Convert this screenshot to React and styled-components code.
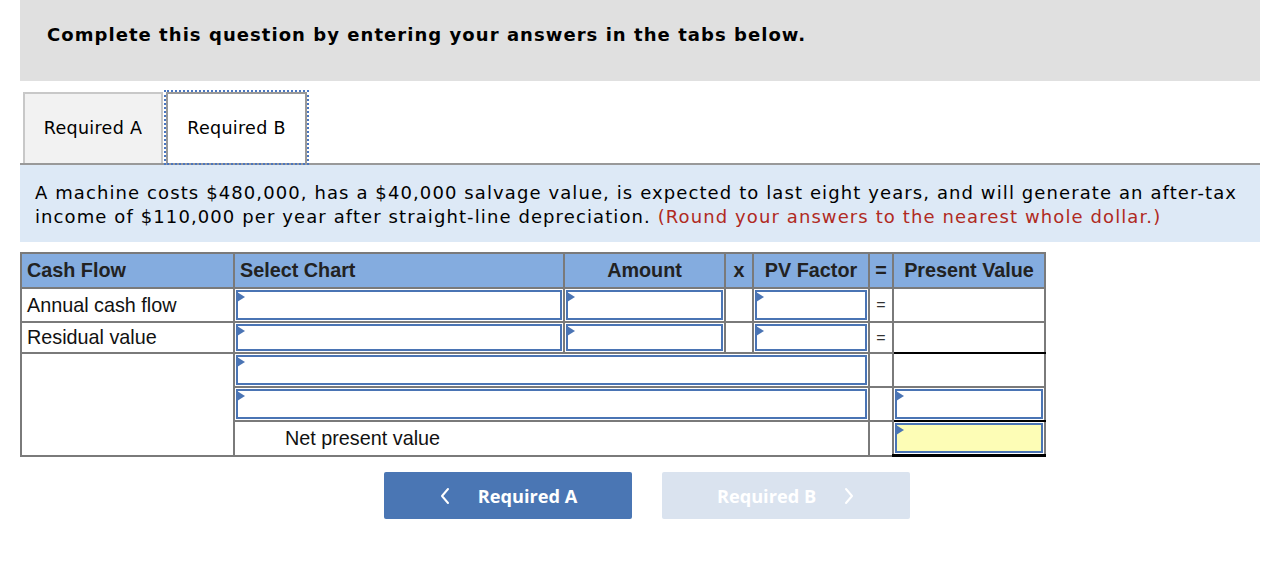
import React from "react";
import styled, { createGlobalStyle } from "styled-components";

const Global = createGlobalStyle`
  html, body { margin: 0; padding: 0; background: #fff; }
  body { padding: 0 6px 0 20px; font-family: "DejaVu Sans", Verdana, sans-serif; color: #000; }
`;

const Page = styled.div`
  width: 1240px;
`;

const Banner = styled.div`
  box-sizing: border-box;
  height: 81px;
  background: #e0e0e0;
  padding: 23px 27px 0;
  font-weight: bold;
  font-size: 18px;
  letter-spacing: 1.05px;
  line-height: 24px;
  color: #000;
`;

const TabStrip = styled.div`
  display: flex;
  gap: 3px;
  margin-top: 11px;
  padding-left: 3px;
  border-bottom: 2px solid #999;
`;

const Tab = styled.div`
  box-sizing: border-box;
  height: 71px;
  width: ${(p) => (p.$active ? 141 : 140)}px;
  display: flex;
  align-items: center;
  justify-content: center;
  font-size: 17.5px;
  letter-spacing: 0.3px;
  color: #000;
  background: ${(p) => (p.$active ? "#fff" : "#f2f2f2")};
  border: 2px solid ${(p) => (p.$active ? "#999" : "#c8c8c8")};
  border-bottom: none;
  outline: ${(p) => (p.$active ? "2px dotted #4a76c0" : "none")};
  padding-bottom: 2px;
`;

const Prompt = styled.div`
  box-sizing: border-box;
  height: 77px;
  background: #dde9f6;
  padding: 16px 15px 0;
  font-size: 18px;
  letter-spacing: 1.1px;
  line-height: 24px;
  color: #000;
`;

const Hint = styled.span`
  color: #b02a22;
`;

const Grid = styled.table`
  margin-top: 10px;
  width: 1024px;
  table-layout: fixed;
  border-collapse: collapse;
  border: 2px solid #7a7a7a;
  font-family: "Liberation Sans", Arial, sans-serif;
  font-size: 19.8px;
  color: #111;
`;

const HeadRow = styled.tr`
  height: 35px;
  background: #84acdf;
`;

const Row = styled.tr`
  height: ${(p) => p.$h}px;
`;

const Th = styled.th`
  border: 2px solid #7a7a7a;
  padding: 0 5px;
  font-weight: bold;
  color: #222;
  text-align: ${(p) => p.$align || "center"};
  vertical-align: middle;
  white-space: nowrap;
  overflow: hidden;
`;

const Td = styled.td`
  border: 2px solid #7a7a7a;
  padding: 0 5px;
  vertical-align: middle;
  white-space: nowrap;
  ${(p) => p.$rule && `border-bottom: ${p.$rule}px solid #000;`}
`;

const FieldCell = styled.td`
  border: 2px solid #7a7a7a;
  padding: 1px;
  vertical-align: top;
  ${(p) => p.$rule && `border-bottom: ${p.$rule}px solid #000;`}
`;

const Field = styled.div`
  position: relative;
  box-sizing: border-box;
  height: ${(p) => p.$h}px;
  border: 2px solid #4a74b4;
  background: ${(p) => (p.$total ? "#fdfdb6" : "#fff")};

  &::before {
    content: "";
    position: absolute;
    left: -1px;
    top: 0;
    border-top: 5px solid transparent;
    border-bottom: 5px solid transparent;
    border-left: 8px solid #4a74b4;
  }
`;

const OpCell = styled.td`
  border: 2px solid #7a7a7a;
  padding: 0;
  text-align: center;
  vertical-align: middle;
  font-size: 16px;
  color: #333;
`;

const NpvLabel = styled.td`
  border: 2px solid #7a7a7a;
  padding: 0 0 0 50px;
  vertical-align: middle;
  color: #111;
`;

const Nav = styled.div`
  display: flex;
  gap: 30px;
  margin: 15px 0 0 364px;
`;

const NavButton = styled.button`
  box-sizing: border-box;
  width: 248px;
  height: 47px;
  border: none;
  border-radius: 2px;
  display: flex;
  align-items: center;
  justify-content: center;
  gap: 27px;
  font-family: "Open Sans", "Roboto", sans-serif;
  font-weight: 700;
  font-size: 18.2px;
  color: #fff;
  background: ${(p) => (p.disabled ? "#dae3ef" : "#4a76b4")};
  cursor: ${(p) => (p.disabled ? "default" : "pointer")};
  padding: 0;
`;

const Chevron = ({ dir }) => (
  <svg width="12" height="18" viewBox="0 0 12 18" fill="none">
    <path
      d={dir === "left" ? "M9 2 L3 9 L9 16" : "M3 2 L9 9 L3 16"}
      stroke="#fff"
      strokeWidth="2"
      strokeLinecap="round"
      strokeLinejoin="round"
    />
  </svg>
);

export default function App() {
  return (
    <Page>
      <Global />
      <Banner>Complete this question by entering your answers in the tabs below.</Banner>
      <TabStrip>
        <Tab>Required A</Tab>
        <Tab $active>Required B</Tab>
      </TabStrip>
      <Prompt>
        A machine costs $480,000, has a $40,000 salvage value, is expected to last eight years, and will generate an after-tax
        <br />
        income of $110,000 per year after straight-line depreciation.{" "}
        <Hint>(Round your answers to the nearest whole dollar.)</Hint>
      </Prompt>
      <Grid>
        <colgroup>
          <col style={{ width: 213 }} />
          <col style={{ width: 330 }} />
          <col style={{ width: 161 }} />
          <col style={{ width: 28 }} />
          <col style={{ width: 116 }} />
          <col style={{ width: 24 }} />
          <col style={{ width: 152 }} />
        </colgroup>
        <thead>
          <HeadRow>
            <Th $align="left">Cash Flow</Th>
            <Th $align="left">Select Chart</Th>
            <Th>Amount</Th>
            <Th>x</Th>
            <Th>PV Factor</Th>
            <Th>=</Th>
            <Th>Present Value</Th>
          </HeadRow>
        </thead>
        <tbody>
          <Row $h={34}>
            <Td>Annual cash flow</Td>
            <FieldCell><Field $h={30} /></FieldCell>
            <FieldCell><Field $h={30} /></FieldCell>
            <Td />
            <FieldCell><Field $h={30} /></FieldCell>
            <OpCell>=</OpCell>
            <Td />
          </Row>
          <Row $h={31}>
            <Td>Residual value</Td>
            <FieldCell><Field $h={27} /></FieldCell>
            <FieldCell><Field $h={27} /></FieldCell>
            <Td />
            <FieldCell><Field $h={27} /></FieldCell>
            <OpCell>=</OpCell>
            <Td $rule={2} />
          </Row>
          <Row $h={34}>
            <Td rowSpan={3} />
            <FieldCell colSpan={4}><Field $h={30} /></FieldCell>
            <Td />
            <Td />
          </Row>
          <Row $h={34}>
            <FieldCell colSpan={4}><Field $h={30} /></FieldCell>
            <Td />
            <FieldCell $rule={2}><Field $h={30} /></FieldCell>
          </Row>
          <Row $h={34}>
            <NpvLabel colSpan={4}>Net present value</NpvLabel>
            <Td />
            <FieldCell $rule={3}><Field $h={30} $total /></FieldCell>
          </Row>
        </tbody>
      </Grid>
      <Nav>
        <NavButton>
          <Chevron dir="left" />
          <span>Required A</span>
        </NavButton>
        <NavButton disabled>
          <span>Required B</span>
          <Chevron dir="right" />
        </NavButton>
      </Nav>
    </Page>
  );
}
